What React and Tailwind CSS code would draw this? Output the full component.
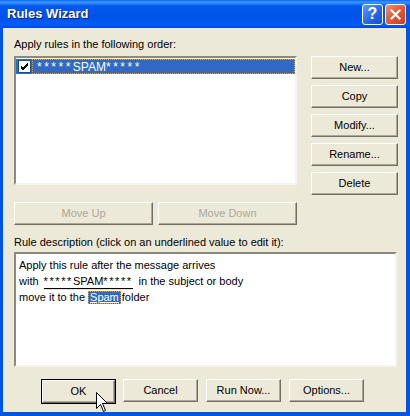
import React from 'react';

// ─── Classic 3D push button ──────────────────────────────────────────────────
const Btn = ({ children, className = '', disabled = false }) => (
  <div
    className={`h-[23px] flex items-center justify-center bg-[#ECE9D8] border border-t-white border-l-white border-r-[#716F64] border-b-[#716F64] shadow-[inset_-1px_-1px_0_#ACA899] text-[11px] ${
      disabled ? 'text-[#ACA899]' : 'text-black'
    } ${className}`}
  >
    {children}
  </div>
);

const Check = () => (
  <div className="w-[13px] h-[13px] bg-white border border-[#1C5180] flex items-center justify-center">
    <svg width="9" height="9" viewBox="0 0 9 9">
      <path d="M1 4 L3 6 L8 1 M1 5 L3 7 L8 2 M1 6 L3 8 L8 3" stroke="black" strokeWidth="1" fill="none" />
    </svg>
  </div>
);

const Cursor = () => (
  <svg width="13" height="21" viewBox="0 0 13 21" className="absolute left-[96px] top-[392px]">
    <path
      d="M0.5 0.5 L0.5 16.5 L4.5 12.5 L7.5 19.5 L9.5 18.5 L6.5 11.5 L11.5 11.5 Z"
      fill="white"
      stroke="black"
      strokeWidth="1"
    />
  </svg>
);

export default function App() {
  return (
    <div
      className="relative w-[410px] h-[416px] flex flex-col bg-[#0054E3] text-[11px] text-black"
      style={{ fontFamily: '"Liberation Sans", Arial, sans-serif' }}
    >
      {/* Barre de titre */}
      <div className="h-[28px] flex items-center pl-[7px] pr-[4px] bg-[linear-gradient(180deg,#0A6AF8_0%,#3D95FF_8%,#0058EE_22%,#0053E8_60%,#005CF5_88%,#0048D8_100%)]">
        <span className="flex-1 text-white font-bold text-[13px] [text-shadow:1px_1px_0_#0A1883]">
          Rules Wizard
        </span>
        <div className="flex gap-[2px]">
          <div className="w-[21px] h-[21px] rounded-[3px] border border-white bg-[linear-gradient(135deg,#5C9BFF,#2663E0_60%,#1A4FD0)] flex items-center justify-center text-white font-bold text-[16px] leading-none">
            ?
          </div>
          <div className="w-[21px] h-[21px] rounded-[3px] border border-white bg-[linear-gradient(135deg,#F09070,#E05A36_50%,#C6401E)] flex items-center justify-center">
            <svg width="11" height="11" viewBox="0 0 11 11">
              <path d="M1.5 1.5 L9.5 9.5 M9.5 1.5 L1.5 9.5" stroke="white" strokeWidth="2.2" strokeLinecap="square" />
            </svg>
          </div>
        </div>
      </div>

      {/* Corps */}
      <div className="flex-1 ml-[3px] mr-[4px] mb-[4px] bg-[#ECE9D8] pl-[11px] flex flex-col">
        <div className="mt-[10px] h-[13px] leading-[13px]">Apply rules in the following order:</div>

        <div className="mt-[5px] flex h-[140px]">
          <div className="w-[283px] h-[129px] bg-white border-2 border-t-[#8C8A7E] border-l-[#8C8A7E] border-r-[#F5F4EE] border-b-[#F5F4EE]">
            <div className="mt-[1px] h-[15px] bg-[#316AC5] flex items-center">
              <div className="ml-[1px] w-[14px] flex justify-center">
                <Check />
              </div>
              <div className="ml-[1px] flex-1 h-[15px] border border-dotted border-[#E0A040] flex items-center pl-[4px] text-white text-[12px]">
                <span className="tracking-[2.5px]">*****</span>SPAM<span className="tracking-[2.5px]">*****</span>
              </div>
            </div>
          </div>

          <div className="ml-[14px] w-[87px] flex flex-col gap-[6px]">
            <Btn>New...</Btn>
            <Btn>Copy</Btn>
            <Btn>Modify...</Btn>
            <Btn>Rename...</Btn>
            <Btn>Delete</Btn>
          </div>
        </div>

        <div className="mt-[6px] flex gap-[5px]">
          <Btn disabled className="w-[139px]">Move Up</Btn>
          <Btn disabled className="w-[139px]">Move Down</Btn>
        </div>

        <div className="mt-[11px] h-[13px] leading-[13px]">
          Rule description (click on an underlined value to edit it):
        </div>

        <div className="mt-[3px] w-[383px] h-[115px] bg-white border-2 border-t-[#8C8A7E] border-l-[#8C8A7E] border-r-[#F5F4EE] border-b-[#F5F4EE] pl-[3px] pt-[3px] leading-[16px]">
          <div>Apply this rule after the message arrives</div>
          <div className="flex items-center">
            <span>with</span>
            <span className="ml-[5px] w-[89px] h-[15px] leading-[14px] text-center border-b border-black shadow-[0_1px_0_#E4E2D8]">
              <span className="tracking-[1.6px]">*****</span>SPAM<span className="tracking-[1.6px]">*****</span>
            </span>
            <span className="ml-[6px]">in the subject or body</span>
          </div>
          <div className="flex items-center">
            <span>move it to the</span>
            <span className="ml-[3px] h-[13px] leading-[11px] bg-[#316AC5] text-white underline border border-dotted border-[#E0A040] px-[1px]">
              Spam
            </span>
            <span className="ml-[1px]">folder</span>
          </div>
        </div>

        <div className="mt-[12px] pl-[27px] flex gap-[7px]">
          <div className="border border-black">
            <Btn className="w-[73px] h-[21px]">OK</Btn>
          </div>
          <Btn className="w-[75px]">Cancel</Btn>
          <Btn className="w-[75px] ml-[1px]">Run Now...</Btn>
          <Btn className="w-[75px] ml-[1px]">Options...</Btn>
        </div>
      </div>

      <Cursor />
    </div>
  );
}
